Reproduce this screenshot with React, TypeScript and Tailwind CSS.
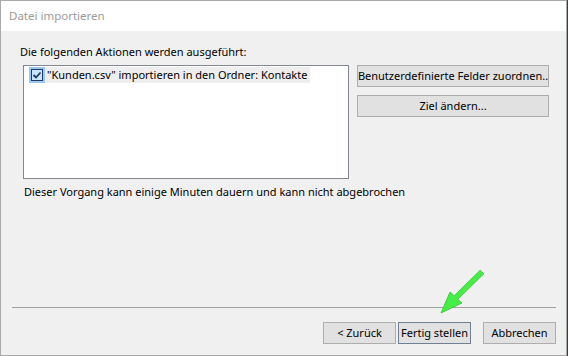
import React from "react";

const font = { fontFamily: '"Noto Sans", "Open Sans", sans-serif' };

const Button = ({
  label,
  width,
  isDefault = false,
}: {
  label: string;
  width: string;
  isDefault?: boolean;
}) => (
  <div
    className={`flex h-[22px] items-center justify-center whitespace-nowrap bg-[#e1e1e1] text-[11px] text-black ${width} border ${
      isDefault ? "border-[#6f7f94]" : "border-[#adadad]"
    }`}
  >
    {label}
  </div>
);

const CheckIcon = () => (
  <svg width="16" height="16" viewBox="0 0 16 16" className="shrink-0">
    <rect x="0" y="0" width="16" height="16" fill="#99c9ef" />
    <rect x="2.5" y="2.5" width="11" height="11" fill="#cce4f7" stroke="#1d3a6a" />
    <path d="M4.5 8 L7 10.5 L11.5 5.5" fill="none" stroke="#1d3a6a" strokeWidth="1.8" />
  </svg>
);

export default function App() {
  return (
    <div className="relative h-[356px] w-[568px] overflow-hidden bg-[#3c3c44]" style={font}>
      <div className="flex h-[356px] w-[567px] flex-col border border-[#a9a9a9] bg-[#f0f0f0]">
        <div className="flex h-[30px] items-center whitespace-nowrap bg-white pl-[8px] text-[11.5px] text-[#9a9a9a]">
          Datei importieren
        </div>

        <div className="flex flex-1 flex-col whitespace-nowrap pl-[19px] pt-[13px]">
          <div className="h-[16px] text-[11px] leading-[16px] text-black">
            Die folgenden Aktionen werden ausgeführt:
          </div>
          <div className="mt-[5px] flex gap-[8px] pl-[3px]">
            <div className="h-[114px] w-[326px] border border-[#828790] bg-white pl-[5px] pt-[1px]">
              <div className="flex h-[16px] w-[281px] items-center gap-[2px] bg-[#eeeeee] text-[11px] text-black">
                <CheckIcon />
                <span className="leading-[16px]">
                  "Kunden.csv" importieren in den Ordner: Kontakte
                </span>
              </div>
            </div>
            <div className="flex flex-col gap-[8px]">
              <Button label="Benutzerdefinierte Felder zuordnen.." width="w-[192px]" />
              <Button label="Ziel ändern..." width="w-[192px]" />
            </div>
          </div>
          <div className="mt-[5px] h-[16px] pl-[4px] text-[11px] leading-[16px] text-black">
            Dieser Vorgang kann einige Minuten dauern und kann nicht abgebrochen
          </div>
        </div>

        <div className="ml-[11px] mr-[10px] h-px bg-[#a0a0a0]" />
        <div className="mb-[11px] mr-[10px] mt-[14px] flex justify-end">
          <div className="flex gap-[2px]">
            <Button label="< Zurück" width="w-[73px]" />
            <Button label="Fertig stellen" width="w-[73px]" isDefault />
          </div>
          <div className="ml-[12px]">
            <Button label="Abbrechen" width="w-[73px]" />
          </div>
        </div>
      </div>

      <svg className="absolute left-0 top-0" width="568" height="356" viewBox="0 0 568 356">
        <polygon
          points="480.2,270.2 454.2,295.7 450,292 441,313 462,303 457.8,299.3 483.8,273.8"
          fill="#45ee45"
          stroke="#34c234"
          strokeWidth="0.8"
          strokeLinejoin="round"
        />
      </svg>
    </div>
  );
}
